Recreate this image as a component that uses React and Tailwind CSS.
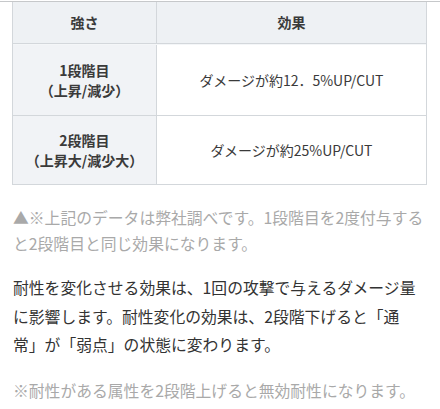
import React from 'react';

const rows = [
  { level: ['1段階目', '（上昇/減少）'], effect: 'ダメージが約12．5%UP/CUT', h: 'h-[70px]' },
  { level: ['2段階目', '（上昇大/減少大）'], effect: 'ダメージが約25%UP/CUT', h: 'h-[69px]' },
];

const App = () => {
  return (
    <div
      className="w-[440px] h-[409px] overflow-hidden bg-white text-[#333]"
      style={{ fontFamily: '"Noto Sans CJK JP", "Noto Sans", sans-serif' }}
    >
      {/* top rule */}
      <div className="mt-px h-px bg-[#c6c8ca]" />

      {/* Table */}
      <div className="mx-[12px] w-[415px] border-x border-b border-[#d3d7db] text-[14px] text-[#3a3a3a]">
        <div className="grid grid-cols-[144px_1fr] h-[41px] bg-[#eef1f4] font-bold">
          <div className="flex items-center justify-center border-r border-[#d3d7db]">強さ</div>
          <div className="flex items-center justify-center">効果</div>
        </div>
        <div className="h-[2px] border-t border-[#d3d7db] bg-[#f4f6f8]" />
        {rows.map((r, i) => (
          <div
            key={i}
            className={`grid grid-cols-[144px_1fr] ${r.h} ${i > 0 ? 'border-t border-[#d3d7db]' : ''}`}
          >
            <div className="flex flex-col items-center justify-center bg-[#f1f3f6] border-r border-[#d3d7db] font-bold leading-[20px]">
              <span>{r.level[0]}</span>
              <span>{r.level[1]}</span>
            </div>
            <div className="flex items-center justify-center">{r.effect}</div>
          </div>
        ))}
      </div>

      {/* Notes */}
      <div className="px-[13px] text-[15.8px]">
        <p className="mt-[20px] leading-[26px] text-[#a9a9a9] whitespace-nowrap">
          ▲※上記のデータは弊社調べです。1段階目を2度付与する
          <br />
          と2段階目と同じ効果になります。
        </p>
        <p className="mt-[17px] leading-[28.5px] text-[#333] whitespace-nowrap">
          耐性を変化させる効果は、1回の攻撃で与えるダメージ量
          <br />
          に影響します。耐性変化の効果は、2段階下げると「通
          <br />
          常」が「弱点」の状態に変わります。
        </p>
        <p className="mt-[18px] leading-[26px] text-[#a9a9a9] whitespace-nowrap">
          ※耐性がある属性を2段階上げると無効耐性になります。
        </p>
      </div>
    </div>
  );
};

export default App;
